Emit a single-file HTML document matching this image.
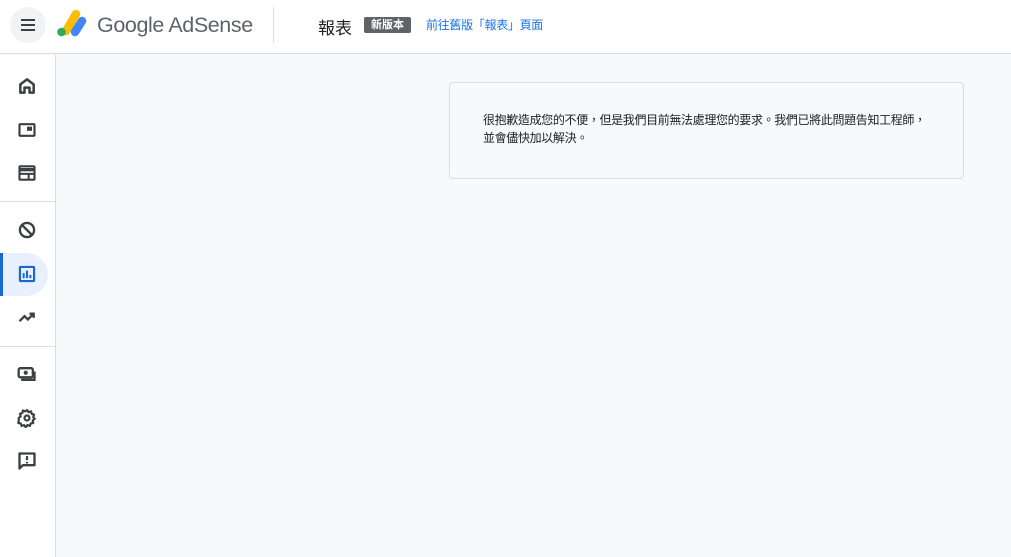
<!DOCTYPE html>
<html><head><meta charset="utf-8"><style>
*{margin:0;padding:0;box-sizing:border-box}
body{width:1011px;height:557px;overflow:hidden;background:#f8f9fa;font-family:"Liberation Sans","Noto Sans CJK TC",sans-serif;position:relative}
.hdr{position:absolute;left:0;top:0;width:1011px;height:54px;background:#fff;border-bottom:1px solid #dadce0}
.menu{position:absolute;left:10px;top:7px;width:36px;height:36px;border-radius:50%;background:#f1f3f4}
.side{position:absolute;left:0;top:55px;width:56px;height:502px;background:#fff;border-right:1px solid #dadce0}
.ic{position:absolute;left:17px;width:20px;height:20px}
.sep{position:absolute;left:0;width:55px;height:1px;background:#dadce0}
.card{position:absolute;left:449px;top:82px;width:515px;height:97px;border:1px solid #dadce0;border-radius:4px;background:#f8f9fa;font-size:12px;line-height:18px;color:#202124;padding:28px 0 0 33px;letter-spacing:-0.35px}
</style></head><body>
<div class="hdr">
 <div class="menu"><svg width="36" height="36" viewBox="0 0 36 36"><path d="M11 13h14M11 18h14M11 23h14" stroke="#3c4043" stroke-width="2"/></svg></div>
 <svg style="position:absolute;left:55px;top:9px" width="34" height="30" viewBox="0 0 34 30">
  <line x1="21" y1="5" x2="11" y2="22" stroke="#fbbc04" stroke-width="8.5" stroke-linecap="round"/>
  <line x1="27" y1="12" x2="20" y2="23" stroke="#4285f4" stroke-width="8.5" stroke-linecap="round"/>
  <circle cx="6.5" cy="23" r="4.3" fill="#34a853"/>
 </svg>
 <div style="position:absolute;left:97px;top:13px;font-size:21.5px;color:#5f6368;letter-spacing:-0.4px">Google AdSense</div>
 <div style="position:absolute;left:273px;top:7px;width:1px;height:36px;background:#dadce0"></div>
 <div style="position:absolute;left:318px;top:14px;font-size:17px;color:#202124">報表</div>
 <div style="position:absolute;left:364px;top:17px;width:47px;height:16px;background:#5f6368;border-radius:2px;color:#fff;font-size:11px;font-weight:bold;text-align:center;line-height:16px">新版本</div>
 <div style="position:absolute;left:426px;top:16px;font-size:12px;color:#1a73e8;letter-spacing:-0.3px">前往舊版「報表」頁面</div>
</div>
<div class="side">
 <svg class="ic" style="top:21px" viewBox="0 0 24 24"><path d="M4 20V10l8-6 8 6v10h-5v-6H9v6z" fill="none" stroke="#3c4043" stroke-width="3" stroke-linejoin="round"/></svg>
 <svg class="ic" style="top:65px" viewBox="0 0 24 24"><rect x="3" y="5" width="18" height="14" rx="1" fill="none" stroke="#3c4043" stroke-width="2.6"/><rect x="12" y="8" width="6" height="5" fill="#3c4043"/></svg>
 <svg class="ic" style="top:108px" viewBox="0 0 24 24"><rect x="3" y="4" width="18" height="16" rx="1" fill="none" stroke="#3c4043" stroke-width="2.6"/><path d="M3 6h18v4H3z" fill="#3c4043"/><path d="M3 13h18M14 13v7" stroke="#3c4043" stroke-width="2.4"/></svg>
 <div class="sep" style="top:146px"></div>
 <svg class="ic" style="top:165px" viewBox="0 0 24 24"><circle cx="12" cy="12" r="8.5" fill="none" stroke="#3c4043" stroke-width="2.8"/><path d="M6 6l12 12" stroke="#3c4043" stroke-width="2.8"/></svg>
 <div style="position:absolute;left:0;top:198px;width:48px;height:43px;background:#e8f0fe;border-radius:0 22px 22px 0"></div>
 <div style="position:absolute;left:0;top:198px;width:3px;height:43px;background:#1967d2"></div>
 <svg class="ic" style="top:209px" viewBox="0 0 24 24"><rect x="3.5" y="3.5" width="17" height="17" rx="1" fill="none" stroke="#1967d2" stroke-width="2.6"/><path d="M8 11v6M12 8v9M16 13v4" stroke="#1967d2" stroke-width="2.4"/></svg>
 <svg class="ic" style="top:252px" viewBox="0 0 24 24"><path d="M3 17l6-6 4 4 7-7M15 8h5v5" fill="none" stroke="#3c4043" stroke-width="2.8"/></svg>
 <div class="sep" style="top:291px"></div>
 <svg class="ic" style="top:309px" viewBox="0 0 24 24"><rect x="2" y="5" width="17" height="11" rx="2" fill="none" stroke="#3c4043" stroke-width="2.8"/><circle cx="10.5" cy="10.5" r="2.5" fill="#3c4043"/><path d="M5 19h16V9" fill="none" stroke="#3c4043" stroke-width="2.8"/></svg>
 <svg class="ic" style="top:353px" viewBox="0 0 24 24"><circle cx="12" cy="12" r="3" fill="none" stroke="#3c4043" stroke-width="2.6"/><path d="M12 2.5l2 2.5 3-1 .5 3 3 1-1 3 1.8 2-2.5 2 .7 3-3 .5-1 3-3-1-2 2.5-2-2.5-3 1-1-3-3-.5.7-3L2 12l2.5-2-1-3 3-1 .5-3 3 1z" fill="none" stroke="#3c4043" stroke-width="2.6" stroke-linejoin="round"/></svg>
 <svg class="ic" style="top:396px" viewBox="0 0 24 24"><path d="M3 3h18v14H7l-4 4z" fill="none" stroke="#3c4043" stroke-width="2.8" stroke-linejoin="round"/><path d="M12 6v5M12 13v2" stroke="#3c4043" stroke-width="2.6"/></svg>
</div>
<div class="card">很抱歉造成您的不便，但是我們目前無法處理您的要求。我們已將此問題告知工程師，<br>並會儘快加以解決。</div>
</body></html>
